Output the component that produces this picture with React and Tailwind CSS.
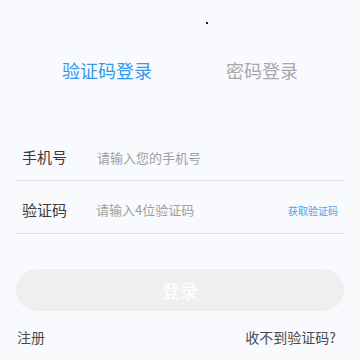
import React from 'react';

const font = { fontFamily: '"Noto Sans CJK SC", "Noto Sans", sans-serif' };

const App = () => {
  return (
    <div className="w-[360px] h-[360px] bg-[#f9fafd] overflow-hidden flex flex-col" style={font}>
      {/* camera dot */}
      <div className="pt-[22px] pl-[206px]">
        <div className="w-[2px] h-[2px] bg-[#222]" />
      </div>

      {/* tabs */}
      <div className="mt-[34px] flex h-[24px] items-center">
        <div className="w-[214px] pl-[62px] text-[18px] leading-[24px] text-[#3399ee]">验证码登录</div>
        <div className="text-[18px] leading-[24px] text-[#a8a8a8] pl-[12px]">密码登录</div>
      </div>

      {/* form */}
      <div className="mt-[53px] mx-[16px]">
        <div className="h-[46px] flex items-center border-b border-[#dedfe2]">
          <span className="w-[81px] pl-[6px] text-[15px] text-[#3a3a3a]">手机号</span>
          <span className="text-[13px] text-[#a0a0a0]">请输入您的手机号</span>
        </div>
        <div className="h-[53px] pt-[6px] flex items-center border-b border-[#dedfe2]">
          <span className="w-[80px] pl-[6px] text-[15px] text-[#3a3a3a]">验证码</span>
          <span className="flex-1 text-[13px] text-[#a0a0a0]">请输入4位验证码</span>
          <span className="pr-[6px] text-[10px] text-[#4aa3ea]">获取验证码</span>
        </div>
      </div>

      {/* login button */}
      <div className="mt-[35px] mx-[16px] h-[42px] rounded-full bg-[#efeff0] flex items-center justify-center">
        <span className="text-[18px] text-white">登录</span>
      </div>

      {/* footer */}
      <div className="mt-[16px] mx-[17px] mr-[24px] flex justify-between items-center h-[20px] text-[14px] text-[#4a4a4a]">
        <span>注册</span>
        <span>收不到验证码?</span>
      </div>
    </div>
  );
};

export default App;
